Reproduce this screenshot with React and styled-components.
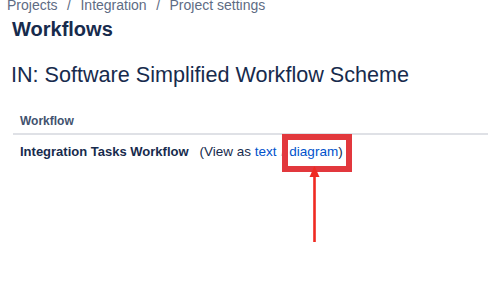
import React from "react";
import styled, { createGlobalStyle } from "styled-components";

const GlobalStyle = createGlobalStyle`
  html, body {
    margin: 0;
    padding: 0;
    background: #ffffff;
    overflow: hidden;
  }
  body {
    font-family: "Liberation Sans", Arial, sans-serif;
    color: #172b4d;
  }
`;

const Page = styled.div`
  position: relative;
  width: 488px;
  height: 286px;
  overflow: hidden;
`;

const Breadcrumbs = styled.nav`
  display: flex;
  align-items: baseline;
  margin: -2px 0 0 7px;
  font-size: 14px;
  line-height: 15px;
  color: #5e6c84;
  white-space: nowrap;
`;

const Crumb = styled.a`
  color: inherit;
  text-decoration: none;
`;

const Sep = styled.span`
  margin: 0 9.5px;
`;

const PageTitle = styled.h1`
  margin: 4px 0 0 12px;
  font-size: 20px;
  line-height: 24px;
  font-weight: 700;
  color: #172b4d;
`;

const SchemeTitle = styled.h2`
  margin: 20px 0 0 11px;
  font-size: 21.6px;
  line-height: 28px;
  font-weight: 400;
  color: #172b4d;
  white-space: nowrap;
`;

const Table = styled.table`
  margin: 24px 0 0 13px;
  width: 475px;
  border-collapse: collapse;
`;

const HeadCell = styled.th`
  text-align: left;
  padding: 0 0 4px 7px;
  font-size: 12px;
  line-height: 16px;
  font-weight: 700;
  color: #42526e;
  border-bottom: 2px solid #dfe1e6;
`;

const Cell = styled.td`
  padding: 7px 0 0 7px;
  font-size: 13px;
  line-height: 20px;
  white-space: nowrap;
`;

const WorkflowName = styled.strong`
  font-weight: 700;
  color: #172b4d;
`;

const ViewAs = styled.span`
  margin-left: 11px;
  font-size: 13.5px;
  color: #172b4d;
`;

const Link = styled.a`
  color: #0052cc;
  text-decoration: none;
`;

const Slash = styled.span`
  color: #c1c7d0;
  margin: 0 4.5px;
`;

const Highlight = styled.div`
  position: absolute;
  left: 282px;
  top: 134px;
  width: 70px;
  height: 38px;
  box-sizing: border-box;
  border: 6px solid #e2383d;
`;

const Arrow = styled.svg`
  position: absolute;
  left: 309px;
  top: 166px;
`;

export default function App() {
  return (
    <Page>
      <GlobalStyle />
      <Breadcrumbs>
        <Crumb>Projects</Crumb>
        <Sep>/</Sep>
        <Crumb>Integration</Crumb>
        <Sep>/</Sep>
        <Crumb>Project settings</Crumb>
      </Breadcrumbs>
      <PageTitle>Workflows</PageTitle>
      <SchemeTitle>IN: Software Simplified Workflow Scheme</SchemeTitle>
      <Table>
        <thead>
          <tr>
            <HeadCell>Workflow</HeadCell>
          </tr>
        </thead>
        <tbody>
          <tr>
            <Cell>
              <WorkflowName>Integration Tasks Workflow</WorkflowName>
              <ViewAs>
                (View as <Link>text</Link>
                <Slash>/</Slash>
                <Link>diagram</Link>)
              </ViewAs>
            </Cell>
          </tr>
        </tbody>
      </Table>
      <Highlight />
      <Arrow width="12" height="77" viewBox="0 0 12 77">
        <polygon points="5.5,0 10.5,11 0.5,11" fill="#ef2a22" />
        <rect x="4.2" y="10" width="2.6" height="66" fill="#ef2a22" />
      </Arrow>
    </Page>
  );
}
